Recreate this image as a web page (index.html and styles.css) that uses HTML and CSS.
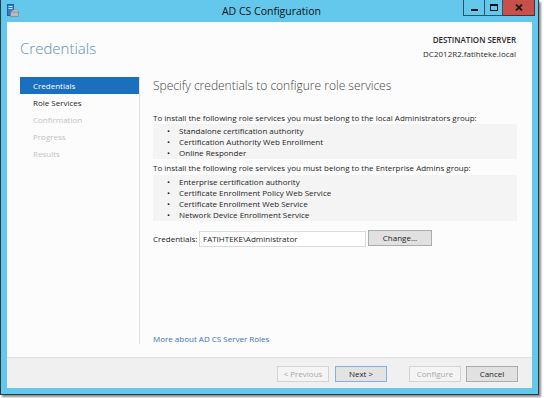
FILE: index.html
```html
<!DOCTYPE html>
<html>
<head>
<meta charset="utf-8">
<title>AD CS Configuration</title>
<link rel="stylesheet" href="styles.css">
</head>
<body>
<div class="window">
  <div class="titlebar">
    <div class="tb-left">
      <svg class="app-icon" width="12" height="13" viewBox="0 0 12 13">
        <rect x="0.5" y="0.5" width="6" height="11" fill="#2f7fd0" stroke="#1d5ea8"/>
        <rect x="1.5" y="2" width="4" height="1" fill="#cfe6ff"/>
        <rect x="1.5" y="4" width="4" height="1" fill="#cfe6ff"/>
        <path d="M4 8 L6 6 L11 6 L11.5 8 Z" fill="#d8d8d8" stroke="#8a8a8a" stroke-width="0.6"/>
        <rect x="3.5" y="8" width="8" height="4.5" fill="#b9b9b9" stroke="#7a7a7a" stroke-width="0.6"/>
      </svg>
    </div>
    <div class="title">AD CS Configuration</div>
    <div class="tb-right">
      <div class="cb cb-min"><span class="min-glyph"></span></div>
      <div class="cb cb-max"><span class="max-glyph"></span></div>
      <div class="cb cb-close">
        <svg width="8" height="7" viewBox="0 0 8 7"><path d="M1 0.5 L7 6.5 M7 0.5 L1 6.5" stroke="#1a1a1a" stroke-width="1.8"/></svg>
      </div>
    </div>
  </div>
  <div class="frame-body">
    <div class="client">
      <div class="header">
        <h1 class="page-title">Credentials</h1>
        <div class="dest">
          <div class="dest-label">DESTINATION SERVER</div>
          <div class="dest-name">DC2012R2.fatihteke.local</div>
        </div>
      </div>
      <div class="main">
        <nav class="steps">
          <div class="step active">Credentials</div>
          <div class="step">Role Services</div>
          <div class="step disabled">Confirmation</div>
          <div class="step disabled">Progress</div>
          <div class="step disabled">Results</div>
        </nav>
        <section class="content">
          <h2 class="content-title">Specify credentials to configure role services</h2>
          <p class="para p1">To install the following role services you must belong to the local Administrators group:</p>
          <ul class="role-box b1">
            <li>Standalone certification authority</li>
            <li>Certification Authority Web Enrollment</li>
            <li>Online Responder</li>
          </ul>
          <p class="para p2">To install the following role services you must belong to the Enterprise Admins group:</p>
          <ul class="role-box b2">
            <li>Enterprise certification authority</li>
            <li>Certificate Enrollment Policy Web Service</li>
            <li>Certificate Enrollment Web Service</li>
            <li>Network Device Enrollment Service</li>
          </ul>
          <div class="cred-row">
            <span class="cred-label">Credentials:</span>
            <div class="cred-input">FATIHTEKE\Administrator</div>
            <div class="btn change-btn">Change...</div>
          </div>
          <a class="more-link">More about AD CS Server Roles</a>
        </section>
      </div>
      <div class="footer">
        <div class="btn btn-disabled btn-prev">&lt; Previous</div>
        <div class="btn btn-focus btn-next">Next &gt;</div>
        <div class="btn btn-disabled btn-config">Configure</div>
        <div class="btn btn-cancel">Cancel</div>
      </div>
    </div>
  </div>
</div>
</body>
</html>
```
FILE: styles.css
```css
* { box-sizing: border-box; }

html, body {
  margin: 0;
  padding: 0;
  background: #ffffff;
}

body {
  font-family: "Open Sans", "Noto Sans", sans-serif;
  color: #1e1e1e;
  width: 544px;
  height: 398px;
  overflow: hidden;
}

.window {
  width: 539px;
  height: 395px;
  background: #63c8eb;
  border: 1px solid #2f3a40;
  border-top: 0;
  box-shadow: 2px 2px 2px rgba(0, 0, 0, 0.45);
  display: flex;
  flex-direction: column;
}

.titlebar {
  height: 22px;
  display: grid;
  grid-template-columns: 1fr auto 1fr;
  align-items: start;
}

.tb-left {
  padding: 4px 0 0 6px;
}

.app-icon { display: block; }

.title {
  font-size: 10.5px;
  line-height: 22px;
  color: #111;
  padding-left: 4px;
}

.tb-right {
  display: flex;
  justify-content: flex-end;
  padding-right: 3px;
}

.cb {
  height: 16px;
  border: 1px solid #2c5466;
  border-top: 0;
  display: flex;
  align-items: center;
  justify-content: center;
}

.cb-min { width: 21px; border-right: 0; }
.cb-max { width: 19px; }
.cb-close {
  width: 32px;
  background: #c7504a;
  border-left: 0;
  border-color: #5a2a28;
}

.min-glyph {
  width: 7px;
  height: 2px;
  background: #111;
  margin-top: 5px;
}

.max-glyph {
  width: 8px;
  height: 7px;
  border: 1px solid #111;
  border-top-width: 2px;
}

.frame-body {
  flex: 1;
  padding: 0 6px 6px 6px;
}

.client {
  width: 525px;
  height: 366px;
  background: #fcfcfc;
  display: flex;
  flex-direction: column;
}

.header {
  height: 55px;
  display: flex;
  justify-content: space-between;
  align-items: flex-start;
  padding: 0 16px 0 13px;
}

.page-title {
  margin: 0;
  padding-top: 15px;
  font-size: 15px;
  line-height: 22px;
  font-weight: 300;
  color: #5b90b8;
}

.dest {
  padding-top: 11px;
  text-align: right;
  font-size: 8px;
  line-height: 14px;
  color: #2a2a2a;
}

.dest-label { font-weight: 600; }

.main {
  flex: 1;
  display: flex;
  padding-bottom: 13px;
}

.steps {
  width: 120px;
  margin-left: 13px;
  border-right: 1px solid #e2e2e2;
}

.step {
  height: 17px;
  line-height: 17px;
  padding-left: 13px;
  font-size: 8px;
  color: #1e1e1e;
}

.step.active {
  background: #1a6fbf;
  color: #ffffff;
}

.step.disabled { color: #c2c2c2; }

.content {
  flex: 1;
  padding: 0 15px 0 13px;
  display: flex;
  flex-direction: column;
}

.content-title {
  margin: 0;
  font-size: 12px;
  line-height: 18px;
  font-weight: 300;
  color: #444;
}

.para {
  margin: 0;
  font-size: 8px;
  line-height: 11px;
}

.p1 { margin-top: 17px; }
.p2 { margin-top: 3px; }

.role-box {
  list-style: none;
  margin: 0;
  padding: 1px 0 1px 26px;
  background: #f4f4f4;
  font-size: 8px;
  line-height: 11px;
}

.b1 { margin-top: 1px; }
.b2 { margin-top: 2px; }

.role-box li::before {
  content: "\2022";
  display: inline-block;
  width: 12px;
  margin-left: -12px;
}

.cred-row {
  margin-top: 10px;
  display: flex;
  align-items: flex-start;
  font-size: 8px;
}

.cred-label {
  width: 46px;
  line-height: 16px;
}

.cred-input {
  width: 167px;
  height: 16px;
  line-height: 14px;
  border: 1px solid #dadada;
  background: #ffffff;
  padding-left: 3px;
}

.btn {
  height: 16px;
  width: 52px;
  font-size: 8px;
  line-height: 14px;
  text-align: center;
  border: 1px solid #acacac;
  background: #e1e1e1;
  color: #1e1e1e;
}

.change-btn {
  width: 64px;
  margin-left: 2px;
  margin-top: -1px;
}

.more-link {
  margin-top: auto;
  font-size: 8px;
  line-height: 11px;
  color: #3b72b4;
}

.footer {
  height: 31px;
  border-top: 1px solid #e0e0e0;
  background: #f0f0f0;
  display: flex;
  justify-content: flex-end;
  align-items: flex-start;
  padding: 8px 14px 0 0;
}

.btn-disabled {
  border-color: #d4d4d4;
  background: #f4f4f4;
  color: #a8a8a8;
}

.btn-focus {
  border-color: #7db2e8;
  background: #e3e3e3;
}

.btn-next { margin-left: 6px; }
.btn-config { margin-left: 22px; }
.btn-cancel { margin-left: 5px; }
```
